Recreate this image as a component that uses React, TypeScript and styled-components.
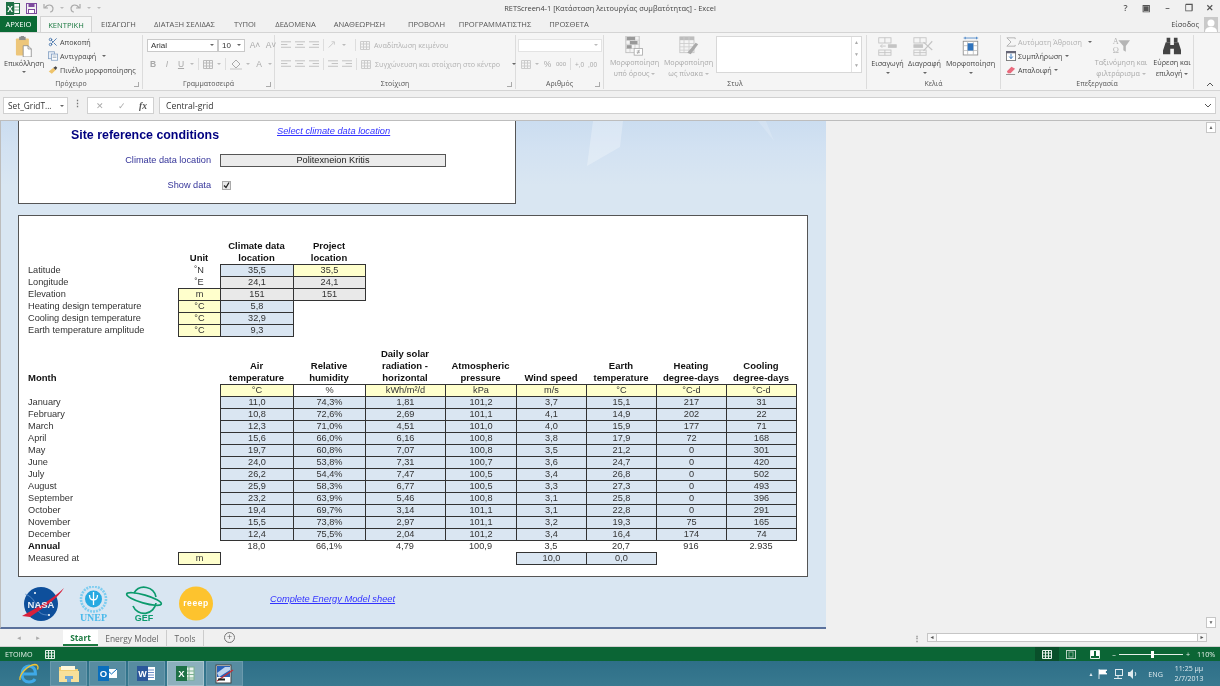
import React from "react";
import styled, { createGlobalStyle } from "styled-components";
import { Scissors } from "lucide-react";

const Global = createGlobalStyle`
  html, body { margin: 0; padding: 0; background: #f0f0f0; }
  * { box-sizing: border-box; }
`;
const UI = `"Open Sans", "Noto Sans", sans-serif`;
const SHEET = `"Liberation Sans", Arial, sans-serif`;
const COLS = "150px 42px 73px 72px 80px 71px 70px 70px 70px 70px";

const Page = styled.div`
  width: 1220px; height: 686px; overflow: hidden; display: flex; flex-direction: column;
  background: #f1f1f1; font-family: ${UI}; filter: blur(0.35px);
`;
/* title */
const TitleBar = styled.div`
  height: 16px; display: grid; grid-template-columns: 1fr auto 1fr; align-items: center;
  background: #f1f1f1; color: #444; font-size: 7.4px;
`;
const Qat = styled.div`display: flex; align-items: center; gap: 6px; padding-left: 6px;`;
const Controls = styled.div`display: flex; justify-content: flex-end; align-items: center; gap: 8px; padding-right: 4px; color: #555;`;
const Ctl = styled.span`width: 13px; text-align: center; font-size: 9px; font-weight: 600; line-height: 14px;`;
const TabsRow = styled.div`height: 16px; display: flex; align-items: stretch; background: #f1f1f1; position: relative;`;
const FileTab = styled.div`
  width: 37px; background: #0b6a35; color: #fff; font-size: 7.6px; display: flex; align-items: center; justify-content: center; margin-right: 3px;
`;
const Tab = styled.div<{ $w: number; $active?: boolean }>`
  width: ${p => p.$w}px; display: flex; align-items: center; justify-content: center; font-size: 7.6px; white-space: nowrap;
  color: ${p => (p.$active ? "#1c7a41" : "#555")};
  background: ${p => (p.$active ? "#f6f6f6" : "transparent")};
  border: ${p => (p.$active ? "1px solid #d4d4d4" : "none")};
  border-bottom: none;
`;
const SignIn = styled.div`margin-left: auto; display: flex; align-items: center; gap: 5px; padding-right: 2px; font-size: 7.3px; color: #444;`;
const Avatar = styled.div`width: 14px; height: 15px; background: #c9c9c9; display: flex; align-items: flex-end; justify-content: center; overflow: hidden;`;
/* ribbon */
const Ribbon = styled.div`height: 59px; display: flex; background: #f5f5f5; border-top: 1px solid #d4d4d4; border-bottom: 1px solid #d4d4d4; font-size: 7.2px; color: #444;`;
const Group = styled.div<{ $w: number }>`
  width: ${p => p.$w}px; flex: none; display: flex; flex-direction: column; position: relative; margin: 2px 0 1px;
  border-right: 1px solid #dcdcdc;
`;
const GroupBody = styled.div`flex: 1; min-height: 0; display: flex;`;
const GroupLabel = styled.div`height: 11px; line-height: 11px; text-align: center; font-size: 7px; color: #555;`;
const Launcher = styled.span`position: absolute; right: 3px; bottom: 2px; width: 5px; height: 5px; border-right: 1px solid #aaa; border-bottom: 1px solid #aaa;`;
const Paste = styled.div`
  width: 48px; flex: none; display: flex; flex-direction: column; align-items: center; padding-top: 1px; line-height: 10px;
  svg { margin-bottom: 1px; }
`;
const Chev = styled.span<{ $dim?: boolean; $drop?: boolean }>`
  display: inline-block; flex: none; width: 0; height: 0; border-left: 2px solid transparent; border-right: 2px solid transparent;
  border-top: 2px solid ${p => (p.$dim ? "#bbb" : "#666")}; vertical-align: middle;
  margin-top: ${p => (p.$drop ? 3 : 0)}px;
`;
const SmallList = styled.div<{ $w?: number; $pl?: number }>`
  display: flex; flex-direction: column; flex: none; padding-left: ${p => p.$pl ?? 0}px;
  ${p => (p.$w ? `width: ${p.$w}px;` : "")}
`;
const SmallTool = styled.div<{ $dim?: boolean }>`
  height: 14px; display: flex; align-items: center; gap: 2px; white-space: nowrap;
  color: ${p => (p.$dim ? "#b1b1b1" : "#444")};
  svg { flex: none; width: 10px; height: 10px; }
`;
const Stack = styled.div<{ $pl?: number }>`flex: 1; display: flex; flex-direction: column; padding: 3px 0 0 ${p => p.$pl ?? 4}px; gap: 5px;`;
const ToolRow = styled.div<{ $gap?: number; $pl?: number }>`
  display: flex; align-items: center; height: 14px; gap: ${p => p.$gap ?? 4}px; padding-left: ${p => p.$pl ?? 0}px; white-space: nowrap; color: #b1b1b1;
  svg { flex: none; }
`;
const Select = styled.div<{ $w: number; $dim?: boolean; $ml?: number }>`
  width: ${p => p.$w}px; height: 13px; background: #fff; border: 1px solid ${p => (p.$dim ? "#e3e3e3" : "#c9c9c9")}; margin-left: ${p => p.$ml ?? 0}px;
  display: flex; align-items: center; justify-content: space-between; padding: 0 3px; font-size: 8px; color: #333; font-family: ${SHEET};
`;
const Letter = styled.span<{ $b?: boolean; $i?: boolean; $u?: boolean; $w?: number; $fs?: number }>`
  width: ${p => p.$w ?? 10}px; text-align: center; font-size: ${p => p.$fs ?? 8.5}px; font-family: ${SHEET}; color: #a9a9a9;
  font-weight: ${p => (p.$b ? 700 : 400)}; font-style: ${p => (p.$i ? "italic" : "normal")}; text-decoration: ${p => (p.$u ? "underline" : "none")};
`;
const VSep = styled.span<{ $ml?: number }>`width: 1px; height: 12px; background: #ddd; flex: none; margin-left: ${p => p.$ml ?? 0}px;`;
const BigRow = styled.div<{ $pl?: number; $gap?: number }>`display: flex; padding-left: ${p => p.$pl ?? 5}px; gap: ${p => p.$gap ?? 3}px;`;
const BigTool = styled.div<{ $w: number; $dim?: boolean; $ml?: number }>`
  width: ${p => p.$w}px; flex: none; margin-left: ${p => p.$ml ?? 0}px; display: flex; flex-direction: column; align-items: center; text-align: center; line-height: 10.5px; padding-top: 1px;
  white-space: nowrap; color: ${p => (p.$dim ? "#a9a9a9" : "#444")};
  svg { margin-bottom: 1px; height: 21px; width: auto; }
`;
const StyleBox = styled.div`
  width: 146px; height: 37px; margin: 1px 0 0 -1px; background: #fff; border: 1px solid #d8d8d8; display: flex; justify-content: flex-end;
`;
const StyleScroll = styled.div`width: 10px; border-left: 1px solid #e3e3e3; display: grid; grid-template-rows: repeat(3, 1fr); color: #aaa; font-size: 5px; text-align: center; line-height: 11px;`;
const Collapse = styled.div`flex: 1; display: flex; align-items: flex-end; justify-content: flex-end; padding: 0 6px 3px 0;`;
/* formula */
const FormulaBar = styled.div`height: 29px; padding: 6px 3px 6px 3px; display: flex; align-items: stretch; background: #f0f0f0;`;
const NameBox = styled.div`
  width: 65px; background: #fff; border: 1px solid #d0d0d0; display: flex; align-items: center; justify-content: space-between;
  padding: 0 3px 0 4px; font-size: 8.3px; color: #333;
`;
const Dots = styled.div`width: 19px; text-align: center; color: #777; font-size: 9px; line-height: 14px; font-weight: 700;`;
const FxBox = styled.div`
  width: 67px; background: #fff; border: 1px solid #d0d0d0; display: flex; align-items: center; justify-content: space-between;
  padding: 0 6px 0 8px; color: #aaa; font-size: 9px;
`;
const Fx = styled.span`font-family: "Liberation Serif", serif; font-style: italic; color: #555; font-size: 9.5px; font-weight: 700;`;
const FormulaInput = styled.div`
  flex: 1; margin: 0 1px 0 5px; background: #fff; border: 1px solid #d0d0d0; display: flex; align-items: center; justify-content: space-between;
  padding: 0 3px 0 6px; font-size: 8.6px; color: #333;
`;
/* sheet */
const SheetArea = styled.div`height: 509px; display: flex; border-top: 1px solid #bdbdbd; background: #f0f0f0;`;
const SheetMain = styled.div`
  width: 826px; position: relative; overflow: hidden; padding-left: 17px; border-left: 1px solid #bdbdbd; border-bottom: 2px solid #5a719c;
  background: linear-gradient(180deg, #cbddf0 0, #d3e2f2 30px, #d9e6f2 65px, #d9e6f2 100%);
  font-family: ${SHEET}; color: #333;
`;
const Streak = styled.div`
  position: absolute; left: 586px; top: 0; width: 36px; height: 45px; background: rgba(255,255,255,.28);
  clip-path: polygon(6px 0, 36px 0, 33px 26px, 0 45px);
`;
const Streak2 = styled.div`position: absolute; left: 757px; top: 0; width: 16px; height: 20px; background: rgba(255,255,255,.16); clip-path: polygon(0 0, 8px 0, 16px 20px);`;
const PanelTop = styled.div`
  width: 498px; height: 83px; position: relative; background: #fff; border: 1px solid #555; border-top: none;
  display: grid; grid-template-columns: 192px 226px; column-gap: 9px; grid-template-rows: 30px 19px 30px;
`;
const TitleRow = styled.div`grid-column: 1 / 3; display: flex; padding: 0 0 0 52px;`;
const SiteTitle = styled.div`width: 206px; font-weight: 700; font-size: 12.4px; color: #000080; line-height: 28px;`;
const SheetLink = styled.span`font-style: italic; text-decoration: underline; color: #3333ff; font-size: 9.3px; line-height: 20px; white-space: nowrap;`;
const FieldLabel = styled.div`text-align: right; font-size: 9.2px; color: #333399; line-height: 19px; align-self: center;`;
const FieldValue = styled.div`height: 13px; align-self: center; background: #ebebeb; border: 1px solid #555; text-align: center; font-size: 9.2px; line-height: 11px; color: #222;`;
const Check = styled.div`
  width: 9px; height: 9px; margin: 0 0 0 2px; align-self: center; background: #e8e8e8; border: 1px solid #aaa; display: flex; align-items: center; justify-content: center;
`;
const PanelData = styled.div`
  width: 790px; height: 362px; margin-top: 11px; padding: 24px 0 0 9px; background: #fff; border: 1px solid #555; position: relative;
  display: grid; grid-template-columns: ${COLS}; grid-auto-rows: 12px; align-content: start; font-size: 9.2px; line-height: 12px;
`;
const RowLabel = styled.div<{ $span?: number; $b?: boolean; $rows?: number }>`
  grid-column: 1 / span ${p => p.$span ?? 1}; white-space: nowrap; font-weight: ${p => (p.$b ? 700 : 400)}; color: ${p => (p.$b ? "#111" : "#333")};
  font-size: ${p => (p.$b ? 9.5 : 9.2)}px;
  ${p => (p.$rows ? `grid-row: span ${p.$rows}; align-self: end;` : "")}
`;
const HeadGap = styled.div`grid-column: 1; grid-row: span 2;`;
const Head = styled.div<{ $rows: number; $col?: number }>`
  ${p => (p.$col ? `grid-column: ${p.$col};` : "")} grid-row: span ${p => p.$rows}; align-self: end; text-align: center; font-weight: 700; font-size: 9.5px; color: #111; white-space: nowrap;
`;
const Plain = styled.div<{ $col?: number; $b?: boolean }>`
  ${p => (p.$col ? `grid-column: ${p.$col};` : "")} text-align: center; white-space: nowrap; font-weight: ${p => (p.$b ? 700 : 400)};
`;
const FILL = { y: "#ffffcc", b: "#dae6f2", g: "#e9e9e9", w: "#fff" };
const Cell = styled.div<{ $f: keyof typeof FILL; $col?: number }>`
  ${p => (p.$col ? `grid-column: ${p.$col};` : "")} background: ${p => FILL[p.$f]}; border: 1px solid #333; margin: 0 -1px -1px 0; height: 13px; text-align: center; line-height: 11px; color: #333; position: relative;
`;
const Spacer = styled.div`grid-column: 1 / -1;`;
const Footer = styled.div`display: flex; align-items: flex-start; position: relative; padding: 9px 0 0 4px;`;
const FootLink = styled(SheetLink)`margin: 3px 0 0 56px;`;
const LogoSlot = styled.div<{ $w: number }>`width: ${p => p.$w}px; flex: none;`;
const RightGap = styled.div`flex: 1; background: #f0f0f0;`;
const VScroll = styled.div`
  width: 14px; padding: 1px 3px 1px 0; display: flex; flex-direction: column; justify-content: space-between;
`;
const SBtn = styled.div`
  width: 10px; height: 11px; background: #fff; border: 1px solid #c6c6c6; color: #666; font-size: 5px; line-height: 9px; text-align: center;
`;
/* sheet tabs */
const TabBar = styled.div`height: 18px; display: flex; align-items: stretch; background: #f0f0f0; font-size: 8.4px; color: #666; border-bottom: 1px solid #d0d0d0;`;
const NavArrows = styled.div`width: 63px; display: flex; align-items: center; gap: 13px; padding-left: 16px; font-size: 6px; color: #aaa;`;
const SheetTab = styled.div<{ $w: number; $on?: boolean; $sep?: boolean }>`
  width: ${p => p.$w}px; display: flex; align-items: center; justify-content: center; white-space: nowrap;
  background: ${p => (p.$on ? "#fff" : "transparent")}; color: ${p => (p.$on ? "#1c7a41" : "#666")}; font-weight: ${p => (p.$on ? 700 : 400)};
  border-bottom: ${p => (p.$on ? "2px solid #1c7a41" : "none")}; border-right: ${p => (p.$sep ? "1px solid #ccc" : "none")};
  margin: 1px 0 0;
`;
const Plus = styled.div`width: 11px; height: 11px; align-self: center; margin-left: 20px; border: 1px solid #777; border-radius: 50%; text-align: center; line-height: 8px; font-size: 9px; color: #666;`;
const HScroll = styled.div`margin-left: auto; display: flex; align-items: center; padding-right: 13px; gap: 0;`;
const HDots = styled.div`width: 20px; text-align: center; color: #888; font-weight: 700;`;
const HTrack = styled.div`width: 262px; height: 9px; background: #fff; border: 1px solid #c6c6c6; margin: 0 -1px 0 -1px;`;
const HBtn = styled.div`width: 10px; height: 9px; border: 1px solid #c6c6c6; background: #f7f7f7; font-size: 5px; line-height: 7px; text-align: center; color: #555;`;
/* status */
const Status = styled.div`height: 14px; background: #0b6535; color: #e6f0ea; display: flex; align-items: center; font-size: 7.2px; padding-left: 5px;`;
const MacroIcon = styled.span`margin-left: 12px; display: flex;`;
const ViewBtns = styled.div`margin-left: auto; display: flex; align-items: stretch; height: 100%;`;
const ViewBtn = styled.div<{ $on?: boolean }>`width: 24px; display: flex; align-items: center; justify-content: center; background: ${p => (p.$on ? "#094f2a" : "transparent")};`;
const Zoom = styled.div`display: flex; align-items: center; margin-left: 5px; padding-right: 5px;`;
const ZoomTrack = styled.div`width: 64px; height: 1px; background: #e6f0ea; margin: 0 3px; position: relative;`;
const Knob = styled.span`position: absolute; left: 32px; top: -3px; width: 3px; height: 7px; background: #fff;`;
const ZoomPct = styled.span`margin-left: 7px; width: 18px; font-size: 7.2px;`;
/* taskbar */
const Taskbar = styled.div`height: 25px; background: linear-gradient(180deg,#2e6f88,#38798f); display: flex; align-items: stretch; color: #dfeaee;`;
const Start = styled.div`width: 50px; display: flex; align-items: center; justify-content: flex-end; padding-right: 11px;`;
const TaskBtn = styled.div<{ $on?: boolean }>`
  width: 37px; margin-right: 2px; display: flex; align-items: center; justify-content: center;
  background: ${p => (p.$on ? "#8cb0bd" : "#578ca1")}; border: 1px solid ${p => (p.$on ? "#a9c5cf" : "#6b9aad")};
`;
const Tray = styled.div`margin-left: auto; display: flex; align-items: center; gap: 5px; padding-right: 14px; font-size: 7.2px;`;
const TrayArrow = styled.span`font-size: 5px;`;
const Eng = styled.span`margin-left: 5px;`;
const Clock = styled.div`text-align: center; line-height: 10px; font-size: 7px; width: 34px; margin-left: 4px; white-space: nowrap;`;
const FlipSvg = styled.svg<{ $flip?: boolean }>`transform: ${p => (p.$flip ? "scaleX(-1)" : "none")};`;

/* icons */
const Lines: React.FC<{ rows: [number, number, number][]; color?: string }> = ({ rows, color = "#bdbdbd" }) => (
  <svg width="10" height="10" viewBox="0 0 11 10">
    {rows.map(([a, b, y], i) => <line key={i} x1={a} x2={b} y1={y} y2={y} stroke={color} />)}
  </svg>
);
const L3 = (a: number[], b: number[]) => [[a[0], b[0], 1.5], [a[1], b[1], 4.5], [a[2], b[2], 7.5]] as [number, number, number][];
const ALIGN_L = L3([0, 0, 0], [11, 7, 11]);
const ALIGN_C = L3([0, 2, 0], [11, 9, 11]);
const ALIGN_R = L3([0, 4, 0], [11, 11, 11]);
const INDENT_L = [[0, 11, 1.5], [4, 11, 4.5], [0, 11, 7.5]] as [number, number, number][];
const Copy = () => (
  <svg width="12" height="11" viewBox="0 0 13 12"><rect x=".5" y=".5" width="8" height="9" fill="#e8eef6" stroke="#7f9cc0" /><rect x="4.5" y="3.5" width="8" height="8" fill="#fff" stroke="#7f9cc0" /><path d="M6 6h5M6 8h5" stroke="#9ab" /></svg>
);
const Painter = () => (
  <svg width="12" height="11" viewBox="0 0 13 12"><path d="M1 8 L7 3 L10 6 L5 11 Z" fill="#eec36a" /><path d="M7 3 L10 1 L12 3 L10 6 Z" fill="#444" /></svg>
);
const PasteIcon = () => (
  <svg width="18" height="21" viewBox="0 0 20 26">
    <rect x="0" y="3" width="16" height="21" rx="1" fill="#edc67a" />
    <rect x="4" y="1" width="8" height="4" fill="#8d8d8d" /><rect x="6" y="0" width="4" height="2" fill="#8d8d8d" />
    <path d="M9 12h6l4 4v10H9z" fill="#fff" stroke="#8a8a8a" />
    <path d="M15 12v4h4" fill="none" stroke="#8a8a8a" />
  </svg>
);
const CondFmt = () => (
  <svg width="22" height="24" viewBox="0 0 22 24">
    <rect x="1" y="0" width="16" height="20" fill="#f4f4f4" stroke="#bbb" />
    <path d="M1 5h16M1 10h16M1 15h16M6 0v20M12 0v20" stroke="#ccc" />
    <rect x="2" y="1" width="10" height="4" fill="#999" /><rect x="6" y="6" width="9" height="4" fill="#999" /><rect x="2" y="11" width="6" height="4" fill="#999" />
    <rect x="11" y="15" width="10" height="8" fill="#fff" stroke="#aaa" /><path d="M14 18h4M14 20h4M17 16.500l-2 5" stroke="#888" fill="none" strokeWidth=".7" />
  </svg>
);
const TableFmt = () => (
  <svg width="24" height="24" viewBox="0 0 24 24">
    <rect x="1" y="1" width="17" height="19" fill="#f4f4f4" stroke="#c4c4c4" />
    <rect x="1" y="1" width="17" height="4" fill="#bdbdbd" />
    <path d="M1 9h17M1 13h17M1 17h17M6 1v19M12 1v19" stroke="#ccc" />
    <path d="M10 20 L20 8 L23 10 L14 22 Z" fill="#aaa" />
  </svg>
);
const InsertI = () => (
  <svg width="24" height="24" viewBox="0 0 24 24" fill="none" stroke="#c4c4c4">
    <rect x="2" y="2" width="14" height="6" /><path d="M9 2v6" /><rect x="2" y="16" width="14" height="6" /><path d="M9 16v6M2 19h14" />
    <rect x="13" y="10" width="9" height="3" fill="#c4c4c4" /><path d="M10 11.500H4M6 9.500l-2 2 2 2" />
  </svg>
);
const DeleteI = () => (
  <svg width="26" height="24" viewBox="0 0 26 24" fill="none" stroke="#c4c4c4">
    <rect x="1" y="2" width="14" height="6" /><path d="M8 2v6" /><rect x="1" y="16" width="14" height="6" /><path d="M8 16v6M1 19h14" />
    <rect x="1" y="10" width="10" height="3" fill="#c4c4c4" /><path d="M12 7 L22 16 M22 6 L12 17" strokeWidth="1.3" />
  </svg>
);
const FormatI = () => (
  <svg width="22" height="26" viewBox="0 0 22 26">
    <path d="M2 2.500h18M4 1v3M18 1v3" stroke="#3f7fc5" />
    <rect x="1.500" y="6.500" width="18" height="17" fill="#fff" stroke="#888" />
    <path d="M1.500 12h18M1.500 18h18M7 6.500v17M14 6.500v17" stroke="#bbb" />
    <rect x="7" y="9" width="7" height="9" fill="#2f73bd" />
  </svg>
);
const Sigma = () => <svg width="12" height="11" viewBox="0 0 12 11"><path d="M11 2V.5H1L6 5.500 1 10.500h10V9" fill="none" stroke="#b5b5b5" strokeWidth="1.2" /></svg>;
const Fill = () => <svg width="11" height="11" viewBox="0 0 11 11"><rect x=".5" y=".5" width="10" height="10" fill="#fff" stroke="#777" /><rect x="0" y="0" width="11" height="2.500" fill="#667" /><path d="M5.500 3v5M3.500 6l2 2.500 2-2.500" stroke="#2f73bd" fill="none" /></svg>;
const Eraser = () => <svg width="11" height="11" viewBox="0 0 11 11"><path d="M1 7l5-5 4 2-5 5H2z" fill="#e96a7c" /><path d="M0 10.500h10" stroke="#888" /></svg>;
const SortI = () => (
  <svg width="26" height="24" viewBox="0 0 26 24">
    <text x="7" y="10" fontSize="10" textAnchor="middle" fill="#b5b5b5" fontFamily="Liberation Serif">A</text>
    <text x="7" y="21" fontSize="10" textAnchor="middle" fill="#b5b5b5" fontFamily="Liberation Serif">Ω</text>
    <path d="M10 5h14l-5 7v7l-3-2v-5z" fill="#b5b5b5" />
  </svg>
);
const Binoculars = () => (
  <svg width="20" height="22" viewBox="0 0 20 22" fill="#444">
    <path d="M4 2h4v5H4zM12 2h4v5h-4z" /><path d="M3 7h5v3h4V7h5l3 9v4h-8v-6H8v6H0v-4z" />
  </svg>
);
const Nasa = () => (
  <svg width="42" height="36" viewBox="0 0 42 36">
    <circle cx="19" cy="18" r="17" fill="#0e4f9b" />
    <path d="M3 8c8 3 10 8 12 14s6 7 12 7" fill="none" stroke="#6f9bd0" strokeWidth=".7" />
    <path d="M0 30 C14 22, 30 14, 42 2 C36 12, 24 20, 8 31z" fill="#d8203b" />
    <circle cx="13" cy="7" r="1" fill="#fff" /><circle cx="27" cy="29" r="1" fill="#fff" />
    <text x="19" y="22" fontSize="9.500" fontWeight="700" textAnchor="middle" fill="#e6edf6" fontFamily="Liberation Sans">NASA</text>
  </svg>
);
const Unep = () => (
  <svg width="32" height="36" viewBox="0 0 32 36">
    <circle cx="15.500" cy="13" r="12.500" fill="none" stroke="#7fcdf0" strokeWidth="2.600" strokeDasharray="2 1" />
    <circle cx="15.500" cy="13" r="8.500" fill="#27a9e1" />
    <path d="M15.500 6v13M11.500 9c0 4 2 5 4 5s4-1 4-5" stroke="#fff" strokeWidth="1.300" fill="none" />
    <text x="15.500" y="35" fontSize="10" fontWeight="700" textAnchor="middle" fill="#4ab9ea" fontFamily="Liberation Serif">UNEP</text>
  </svg>
);
const Gef = () => (
  <svg width="40" height="36" viewBox="0 0 40 36" fill="none" stroke="#0b9a6c" strokeWidth="1.700">
    <path d="M9 7A12 12 0 0 1 31 11M31 17A12 12 0 0 1 8 20" />
    <ellipse cx="19" cy="13" rx="18" ry="4" transform="rotate(16 19 13)" />
    <text x="19" y="35" fontSize="9" fontWeight="700" textAnchor="middle" fill="#0b9a6c" stroke="none" fontFamily="Liberation Sans">GEF</text>
  </svg>
);
const Reeep = () => (
  <svg width="34" height="35" viewBox="0 0 34 35">
    <circle cx="17" cy="17.500" r="17" fill="#fdc32e" />
    <text x="17" y="20" fontSize="8.500" fontWeight="700" textAnchor="middle" letterSpacing=".6" fill="#fff" fontFamily="Liberation Sans">reeep</text>
  </svg>
);
const ExcelMini = () => (
  <svg width="14" height="13" viewBox="0 0 14 13"><rect x="5" y="1.500" width="8.500" height="10" fill="#fff" stroke="#1e7145" /><path d="M8 1.500v10M5 5h8M5 8h8" stroke="#7ab08f" /><rect x="0" y="0" width="8" height="13" fill="#1e7145" /><text x="4" y="10" fontSize="8.500" fontWeight="700" fill="#fff" textAnchor="middle" fontFamily="Liberation Sans">X</text></svg>
);
const Save = () => <svg width="11" height="11" viewBox="0 0 11 11"><rect x=".5" y=".5" width="10" height="10" fill="none" stroke="#7d4a9e" /><rect x="2.500" y=".5" width="6" height="3.500" fill="#7d4a9e" /><rect x="2.500" y="6.500" width="6" height="4" fill="#fff" stroke="#7d4a9e" /></svg>;
const Undo = ({ flip }: { flip?: boolean }) => <FlipSvg $flip={flip} width="11" height="10" viewBox="0 0 11 10"><path d="M2 5c2-4 7-4 8 0 0 2-1 4-3 4M1 1v4h4" fill="none" stroke="#aaa" strokeWidth="1.2" /></FlipSvg>;
const Grid3 = ({ c = "#e6f0ea" }: { c?: string }) => <svg width="10" height="9" viewBox="0 0 10 9"><path d="M.5.5h9v8h-9zM.5 3h9M.5 6h9M3.500.5v8M6.500.5v8" fill="none" stroke={c} /></svg>;
const PageV = () => <svg width="10" height="9" viewBox="0 0 10 9"><rect x=".5" y=".5" width="9" height="8" fill="none" stroke="#b9d2c3" /><rect x="3" y="2" width="4" height="5" fill="none" stroke="#7fa890" /></svg>;
const BreakV = () => <svg width="10" height="9" viewBox="0 0 10 9"><path d="M.5 8.500v-8h9v8z" fill="none" stroke="#e6f0ea" /><rect x="1" y="1" width="3" height="5" fill="#fff" /><rect x="6" y="1" width="3" height="5" fill="#fff" /></svg>;
const IE = () => (
  <svg width="20" height="21" viewBox="0 0 20 21" fill="none">
    <path d="M3.500 11h13c.5-5-3-8-6.500-8s-7 3-7 8 3 8 7 8c3 0 5-1 6-3" stroke="#3fa9e8" strokeWidth="3" />
    <path d="M1 17C0 11 9 2 16 1.500c3 0 3.500 3 2.500 5" stroke="#f4c430" strokeWidth="1.300" />
  </svg>
);
const Folder = () => <svg width="20" height="17" viewBox="0 0 20 17"><path d="M0 2h8l2 2h9v12H0z" fill="#f2cf74" /><rect x="2" y="1" width="14" height="4" fill="#fff7dc" /><path d="M0 6h20v11H0z" fill="#f8e09a" /><rect x="6" y="11" width="8" height="3" fill="#6fa8d6" /><rect x="8" y="14" width="4" height="3" fill="#6fa8d6" /></svg>;
const Outlook = () => <svg width="19" height="17" viewBox="0 0 19 17"><rect x="8" y="4" width="11" height="9" fill="#fff" /><path d="M8 4l5.500 5L19 4" fill="none" stroke="#0a6ebd" /><rect x="0" y="1" width="11" height="15" fill="#0a6ebd" /><text x="5.500" y="12" fontSize="9.500" fontWeight="700" fill="#fff" textAnchor="middle" fontFamily="Liberation Sans">O</text></svg>;
const WordI = () => <svg width="19" height="17" viewBox="0 0 19 17"><rect x="8" y="2" width="10" height="13" fill="#fff" /><path d="M10 5h7M10 7.500h7M10 10h7M10 12.500h7" stroke="#6d8fc7" /><rect x="0" y="1" width="11" height="15" fill="#2b579a" /><text x="5.500" y="12" fontSize="9" fontWeight="700" fill="#fff" textAnchor="middle" fontFamily="Liberation Sans">W</text></svg>;
const ExcelI = () => <svg width="19" height="17" viewBox="0 0 19 17"><rect x="8" y="2" width="10" height="13" fill="#e8f2ec" stroke="#7ab08f" /><path d="M13 2v13M8 6h10M8 9.500h10M8 13h10" stroke="#7ab08f" /><rect x="0" y="1" width="11" height="15" fill="#1e7145" /><text x="5.500" y="12" fontSize="9.500" fontWeight="700" fill="#fff" textAnchor="middle" fontFamily="Liberation Sans">X</text></svg>;
const Ret = () => <svg width="19" height="20" viewBox="0 0 19 20"><rect x="1" y="1" width="15" height="18" fill="#fff" stroke="#444" /><rect x="2" y="2" width="13" height="11" fill="#2a62b8" /><path d="M2 9l8-6h5v3L4 13z" fill="#bcd3ef" /><path d="M2 17L18 6" stroke="#c2303a" strokeWidth="1.500" /><rect x="3" y="14.500" width="7" height="2" fill="#222" /></svg>;

const MONTHS: [string, ...string[]][] = [
  ["January", "11,0", "74,3%", "1,81", "101,2", "3,7", "15,1", "217", "31"],
  ["February", "10,8", "72,6%", "2,69", "101,1", "4,1", "14,9", "202", "22"],
  ["March", "12,3", "71,0%", "4,51", "101,0", "4,0", "15,9", "177", "71"],
  ["April", "15,6", "66,0%", "6,16", "100,8", "3,8", "17,9", "72", "168"],
  ["May", "19,7", "60,8%", "7,07", "100,8", "3,5", "21,2", "0", "301"],
  ["June", "24,0", "53,8%", "7,31", "100,7", "3,6", "24,7", "0", "420"],
  ["July", "26,2", "54,4%", "7,47", "100,5", "3,4", "26,8", "0", "502"],
  ["August", "25,9", "58,3%", "6,77", "100,5", "3,3", "27,3", "0", "493"],
  ["September", "23,2", "63,9%", "5,46", "100,8", "3,1", "25,8", "0", "396"],
  ["October", "19,4", "69,7%", "3,14", "101,1", "3,1", "22,8", "0", "291"],
  ["November", "15,5", "73,8%", "2,97", "101,1", "3,2", "19,3", "75", "165"],
  ["December", "12,4", "75,5%", "2,04", "101,2", "3,4", "16,4", "174", "74"],
];
const TABS: [string, number][] = [["ΕΙΣΑΓΩΓΗ", 53], ["ΔΙΑΤΑΞΗ ΣΕΛΙΔΑΣ", 79], ["ΤΥΠΟΙ", 42], ["ΔΕΔΟΜΕΝΑ", 59], ["ΑΝΑΘΕΩΡΗΣΗ", 69], ["ΠΡΟΒΟΛΗ", 65], ["ΠΡΟΓΡΑΜΜΑΤΙΣΤΗΣ", 72], ["ΠΡΟΣΘΕΤΑ", 76]];
const MHEAD: string[][] = [
  ["Air", "temperature"], ["Relative", "humidity"], ["Daily solar", "radiation -", "horizontal"],
  ["Atmospheric", "pressure"], ["Wind speed"], ["Earth", "temperature"], ["Heating", "degree-days"], ["Cooling", "degree-days"],
];
const UNITS = ["°C", "%", "kWh/m²/d", "kPa", "m/s", "°C", "°C-d", "°C-d"];
const ANNUAL = ["18,0", "66,1%", "4,79", "100,9", "3,5", "20,7", "916", "2.935"];
const br = (lines: string[]) => lines.map((l, i) => <div key={i}>{l}</div>);

export default function App() {
  return (
    <Page>
      <Global />
      <TitleBar>
        <Qat><ExcelMini /><Save /><Undo /><Chev $dim /><Undo flip /><Chev $dim /><Chev $dim /></Qat>
        <div>RETScreen4-1  [Κατάσταση λειτουργίας συμβατότητας] - Excel</div>
        <Controls><Ctl>?</Ctl><Ctl>▣</Ctl><Ctl>–</Ctl><Ctl>❐</Ctl><Ctl>✕</Ctl></Controls>
      </TitleBar>
      <TabsRow>
        <FileTab>ΑΡΧΕΙΟ</FileTab>
        <Tab $w={52} $active>ΚΕΝΤΡΙΚΗ</Tab>
        {TABS.map(([t, w]) => <Tab key={t} $w={w}>{t}</Tab>)}
        <SignIn>Είσοδος
          <Avatar><svg width="12" height="14" viewBox="0 0 12 14"><circle cx="6" cy="5" r="3.500" fill="#fff" /><path d="M0 14c0-4 3-5 6-5s6 1 6 5z" fill="#fff" /></svg></Avatar>
        </SignIn>
      </TabsRow>
      <Ribbon>
        <Group $w={143}>
          <GroupBody>
            <Paste><PasteIcon /><span>Επικόλληση</span><Chev $drop /></Paste>
            <SmallList>
              <SmallTool><Scissors size={10} color="#3f6fa8" />Αποκοπή</SmallTool>
              <SmallTool><Copy />Αντιγραφή&nbsp;&nbsp;<Chev /></SmallTool>
              <SmallTool><Painter />Πινέλο μορφοποίησης</SmallTool>
            </SmallList>
          </GroupBody>
          <GroupLabel>Πρόχειρο</GroupLabel><Launcher />
        </Group>
        <Group $w={132}>
          <GroupBody>
            <Stack>
              <ToolRow>
                <Select $w={71}>Arial<Chev /></Select>
                <Select $w={27} $ml={-4}>10<Chev /></Select>
                <Letter $w={12}>A˄</Letter><Letter $w={12}>A˅</Letter>
              </ToolRow>
              <ToolRow $pl={1}>
                <Letter $b>B</Letter><Letter $i>I</Letter><Letter $u>U</Letter><Chev $dim /><VSep />
                <Grid3 c="#bbb" /><Chev $dim /><VSep />
                <svg width="12" height="12" viewBox="0 0 12 12"><path d="M2 6l4-4 4 4-4 4z" fill="none" stroke="#aaa" /><rect y="10" width="12" height="2" fill="#ddd" /></svg><Chev $dim />
                <Letter>A</Letter><Chev $dim />
              </ToolRow>
            </Stack>
          </GroupBody>
          <GroupLabel>Γραμματοσειρά</GroupLabel><Launcher />
        </Group>
        <Group $w={241}>
          <GroupBody>
            <Stack $pl={6}>
              <ToolRow>
                <Lines rows={ALIGN_L} /><Lines rows={ALIGN_C} /><Lines rows={ALIGN_R} /><VSep />
                <svg width="10" height="10" viewBox="0 0 14 11"><path d="M1 9L8 2M5 1h4v4" fill="none" stroke="#bbb" /></svg><Chev $dim /><VSep $ml={5} />
                <Grid3 c="#ccc" /><span>Αναδίπλωση κειμένου</span>
              </ToolRow>
              <ToolRow>
                <Lines rows={ALIGN_L} /><Lines rows={ALIGN_C} /><Lines rows={ALIGN_R} /><VSep />
                <Lines rows={INDENT_L} /><Lines rows={INDENT_L} /><VSep /><Grid3 c="#ccc" />
                <span>Συγχώνευση και στοίχιση στο κέντρο</span>&nbsp;&nbsp;<Chev />
              </ToolRow>
            </Stack>
          </GroupBody>
          <GroupLabel>Στοίχιση</GroupLabel><Launcher />
        </Group>
        <Group $w={88}>
          <GroupBody>
            <Stack $pl={2}>
              <ToolRow><Select $w={84} $dim><span /><Chev $dim /></Select></ToolRow>
              <ToolRow $pl={3}>
                <Grid3 c="#ccc" /><Chev $dim /><Letter $w={9}>%</Letter><Letter $fs={6}>000</Letter><VSep /><Letter $w={9} $fs={6.5}>+,0</Letter><Letter $w={9} $fs={6.5}>,00</Letter>
              </ToolRow>
            </Stack>
          </GroupBody>
          <GroupLabel>Αριθμός</GroupLabel><Launcher />
        </Group>
        <Group $w={263}>
          <GroupBody>
            <BigRow>
              <BigTool $w={51} $dim><CondFmt />Μορφοποίηση<span>υπό όρους <Chev $dim /></span></BigTool>
              <BigTool $w={51} $dim><TableFmt />Μορφοποίηση<span>ως πίνακα <Chev $dim /></span></BigTool>
              <StyleBox><StyleScroll><span>▲</span><span>▼</span><span>▼</span></StyleScroll></StyleBox>
            </BigRow>
          </GroupBody>
          <GroupLabel>Στυλ</GroupLabel>
        </Group>
        <Group $w={134}>
          <GroupBody>
            <BigRow $pl={3} $gap={2}>
              <BigTool $w={35}><InsertI />Εισαγωγή<Chev $drop /></BigTool>
              <BigTool $w={35}><DeleteI />Διαγραφή<Chev $drop /></BigTool>
              <BigTool $w={51} $ml={1}><FormatI />Μορφοποίηση<Chev $drop /></BigTool>
            </BigRow>
          </GroupBody>
          <GroupLabel>Κελιά</GroupLabel>
        </Group>
        <Group $w={193}>
          <GroupBody>
            <SmallList $w={95} $pl={5}>
              <SmallTool $dim><Sigma />Αυτόματη Άθροιση&nbsp;&nbsp;<Chev /></SmallTool>
              <SmallTool><Fill />Συμπλήρωση <Chev /></SmallTool>
              <SmallTool><Eraser />Απαλοιφή <Chev /></SmallTool>
            </SmallList>
            <BigTool $w={50} $dim><SortI />Ταξινόμηση και<span>φιλτράρισμα <Chev $dim /></span></BigTool>
            <BigTool $w={42} $ml={5}><Binoculars />Εύρεση και<span>επιλογή <Chev /></span></BigTool>
          </GroupBody>
          <GroupLabel>Επεξεργασία</GroupLabel>
        </Group>
        <Collapse><svg width="8" height="5" viewBox="0 0 8 5"><path d="M1 4l3-3 3 3" fill="none" stroke="#555" /></svg></Collapse>
      </Ribbon>
      <FormulaBar>
        <NameBox>Set_GridT...<Chev /></NameBox>
        <Dots>⋮</Dots>
        <FxBox><span>✕</span><span>✓</span><Fx>fx</Fx></FxBox>
        <FormulaInput>Central-grid<svg width="8" height="5" viewBox="0 0 8 5"><path d="M1 1l3 3 3-3" fill="none" stroke="#555" /></svg></FormulaInput>
      </FormulaBar>
      <SheetArea>
        <SheetMain>
          <Streak /><Streak2 />
          <PanelTop>
            <TitleRow><SiteTitle>Site reference conditions</SiteTitle><SheetLink>Select climate data location</SheetLink></TitleRow>
            <FieldLabel>Climate data location</FieldLabel>
            <FieldValue>Politexneion Kritis</FieldValue>
            <FieldLabel>Show data</FieldLabel>
            <Check><svg width="7" height="7" viewBox="0 0 7 7"><path d="M1 3.500l2 2 3-5" fill="none" stroke="#222" strokeWidth="1.300" /></svg></Check>
          </PanelTop>
          <PanelData>
            <HeadGap />
            <Head $rows={2} $col={2}>Unit</Head>
            <Head $rows={2} $col={3}>{br(["Climate data", "location"])}</Head>
            <Head $rows={2} $col={4}>{br(["Project", "location"])}</Head>
            <RowLabel>Latitude</RowLabel><Plain>˚N</Plain><Cell $f="b">35,5</Cell><Cell $f="y">35,5</Cell>
            <RowLabel>Longitude</RowLabel><Plain $col={2}>˚E</Plain><Cell $f="g">24,1</Cell><Cell $f="g">24,1</Cell>
            <RowLabel>Elevation</RowLabel><Cell $f="y" $col={2}>m</Cell><Cell $f="g">151</Cell><Cell $f="g">151</Cell>
            <RowLabel>Heating design temperature</RowLabel><Cell $f="y" $col={2}>°C</Cell><Cell $f="b">5,8</Cell>
            <RowLabel>Cooling design temperature</RowLabel><Cell $f="y" $col={2}>°C</Cell><Cell $f="b">32,9</Cell>
            <RowLabel>Earth temperature amplitude</RowLabel><Cell $f="y" $col={2}>°C</Cell><Cell $f="b">9,3</Cell>
            <Spacer />
            <RowLabel $span={2} $b $rows={3}>Month</RowLabel>
            {MHEAD.map((l, i) => <Head key={i} $rows={3} $col={i + 3}>{br(l)}</Head>)}
            {UNITS.map((u, i) => <Cell key={i} $f={i === 1 ? "w" : "y"} $col={i + 3}>{u}</Cell>)}
            {MONTHS.map(([m, ...vals]) => (
              <React.Fragment key={m}>
                <RowLabel $span={2}>{m}</RowLabel>
                {vals.map((v, i) => <Cell key={i} $f="b">{v}</Cell>)}
              </React.Fragment>
            ))}
            <RowLabel $span={2} $b>Annual</RowLabel>
            {ANNUAL.map((v, i) => <Plain key={i} $col={i + 3}>{v}</Plain>)}
            <RowLabel>Measured at</RowLabel>
            <Cell $f="y">m</Cell>
            <Cell $f="b" $col={7}>10,0</Cell><Cell $f="b">0,0</Cell>
          </PanelData>
          <Footer>
            <LogoSlot $w={56}><Nasa /></LogoSlot>
            <LogoSlot $w={47}><Unep /></LogoSlot>
            <LogoSlot $w={54}><Gef /></LogoSlot>
            <LogoSlot $w={35}><Reeep /></LogoSlot>
            <FootLink>Complete Energy Model sheet</FootLink>
          </Footer>
        </SheetMain>
        <RightGap />
        <VScroll><SBtn>▲</SBtn><SBtn>▼</SBtn></VScroll>
      </SheetArea>
      <TabBar>
        <NavArrows><span>◄</span><span>►</span></NavArrows>
        <SheetTab $w={35} $on>Start</SheetTab>
        <SheetTab $w={69} $sep>Energy Model</SheetTab>
        <SheetTab $w={37} $sep>Tools</SheetTab>
        <Plus>+</Plus>
        <HScroll>
          <HDots>⋮</HDots><HBtn>◄</HBtn><HTrack /><HBtn>►</HBtn>
        </HScroll>
      </TabBar>
      <Status>
        ΕΤΟΙΜΟ
        <MacroIcon><Grid3 /></MacroIcon>
        <ViewBtns>
          <ViewBtn $on><Grid3 /></ViewBtn><ViewBtn><PageV /></ViewBtn><ViewBtn><BreakV /></ViewBtn>
        </ViewBtns>
        <Zoom>
          <span>–</span><ZoomTrack><Knob /></ZoomTrack><span>+</span><ZoomPct>110%</ZoomPct>
        </Zoom>
      </Status>
      <Taskbar>
        <Start><IE /></Start>
        <TaskBtn><Folder /></TaskBtn>
        <TaskBtn><Outlook /></TaskBtn>
        <TaskBtn><WordI /></TaskBtn>
        <TaskBtn $on><ExcelI /></TaskBtn>
        <TaskBtn><Ret /></TaskBtn>
        <Tray>
          <TrayArrow>▲</TrayArrow>
          <svg width="10" height="10" viewBox="0 0 10 10"><path d="M1 0v10M1 1h8L7 3l2 2H1" fill="#fff" stroke="#fff" strokeWidth=".8" /></svg>
          <svg width="10" height="10" viewBox="0 0 10 10"><rect x="2.500" y=".5" width="7" height="6" fill="none" stroke="#dfeaee" /><path d="M1 9.500h8M5 7v2" stroke="#dfeaee" /></svg>
          <svg width="10" height="10" viewBox="0 0 10 10"><path d="M0 3h2l3-3v10L2 7H0z" fill="#dfeaee" /><path d="M7 3c1 1 1 3 0 4" stroke="#dfeaee" fill="none" /></svg>
          <Eng>ENG</Eng>
          <Clock><div>11:25 μμ</div><div>2/7/2013</div></Clock>
        </Tray>
      </Taskbar>
    </Page>
  );
}
